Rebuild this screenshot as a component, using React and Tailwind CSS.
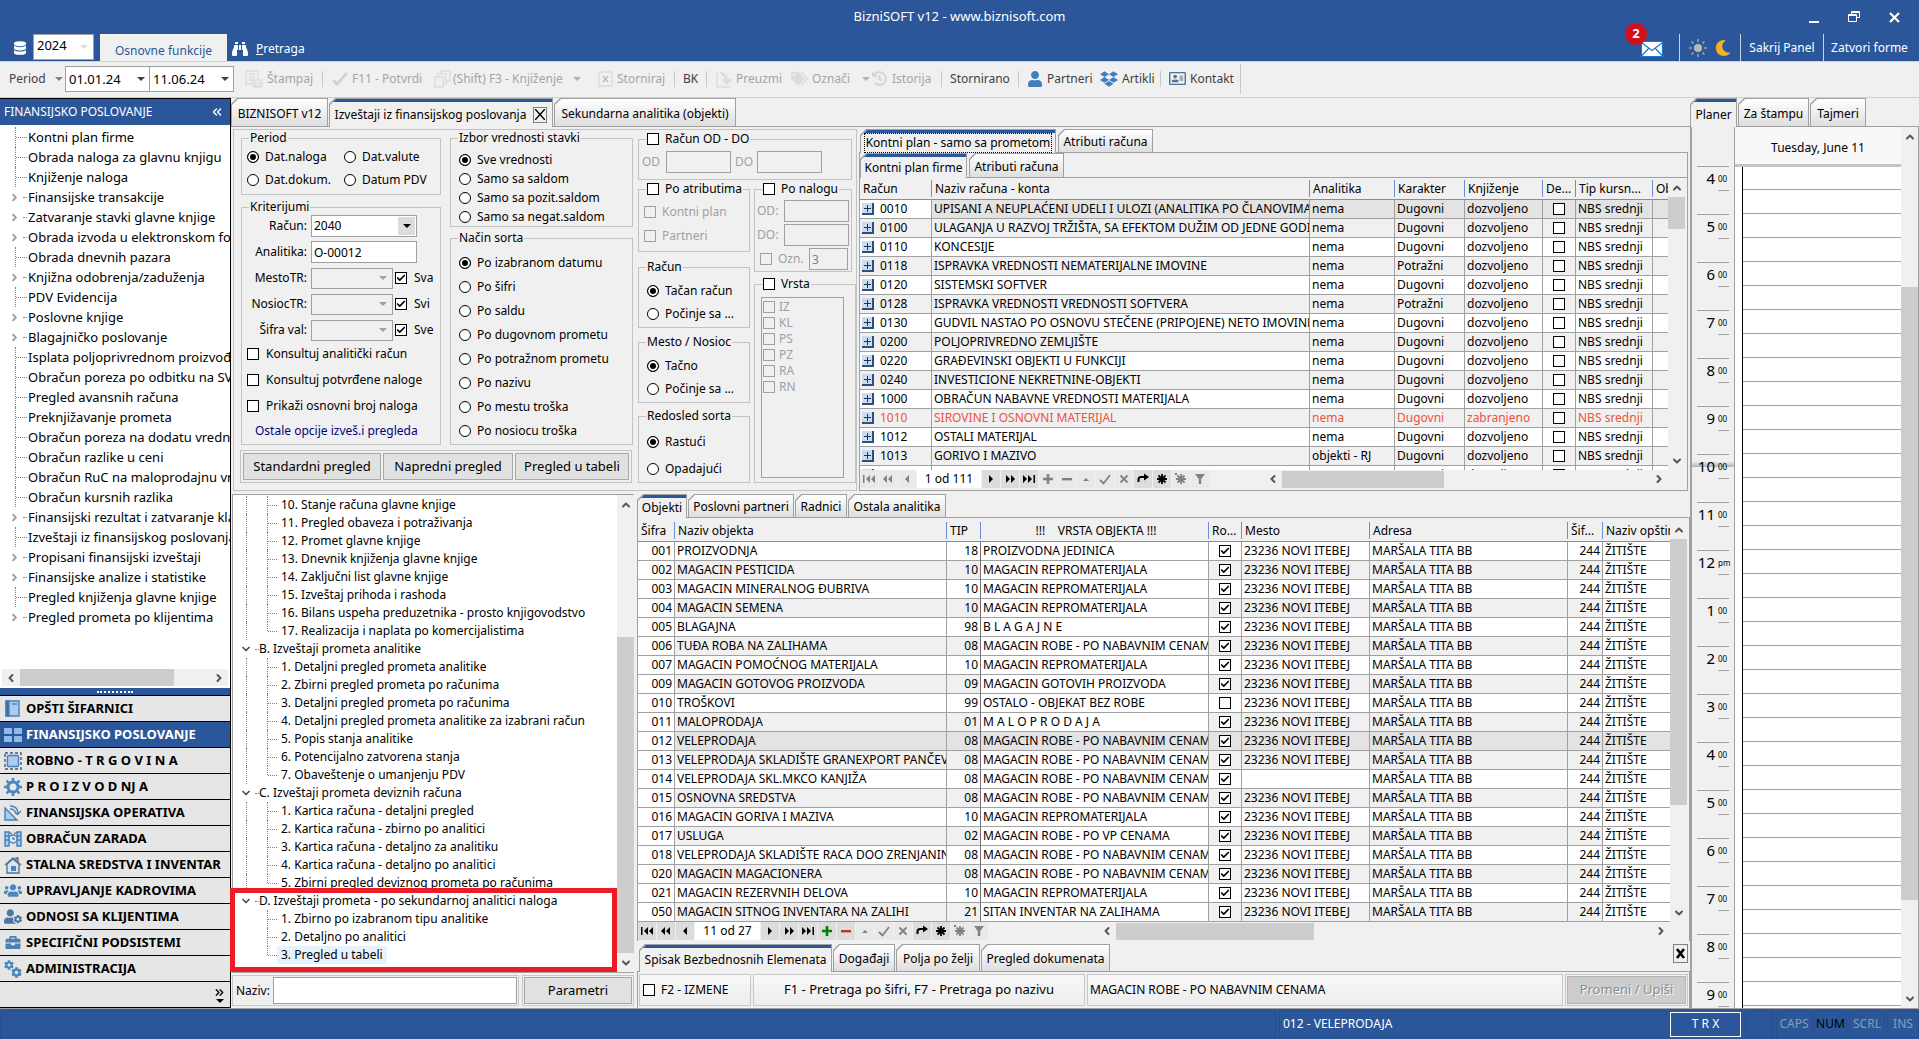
import React, { useState } from 'react';
import { ChevronDown, ChevronLeft, ChevronRight, ChevronUp, ChevronsLeft, ChevronsRight, Check } from 'lucide-react';
import {
  FaBinoculars,
  FaBriefcase,
  FaCog,
  FaCogs,
  FaDatabase,
  FaDropbox,
  FaHistory,
  FaMoon,
  FaRegAddressCard,
  FaTags,
  FaUser,
  FaUserCog,
  FaUsers,
} from 'react-icons/fa';

const MENU = [
  ['Kontni plan firme', false],
  ['Obrada naloga za glavnu knjigu', false],
  ['Knjiženje naloga', false],
  ['Finansijske transakcije', true],
  ['Zatvaranje stavki glavne knjige', true],
  ['Obrada izvoda u elektronskom formatu', true],
  ['Obrada dnevnih pazara', false],
  ['Knjižna odobrenja/zaduženja', true],
  ['PDV Evidencija', false],
  ['Poslovne knjige', true],
  ['Blagajničko poslovanje', true],
  ['Isplata poljoprivrednom proizvođaču', false],
  ['Obračun poreza po odbitku na SVR', false],
  ['Pregled avansnih računa', false],
  ['Preknjižavanje prometa', false],
  ['Obračun poreza na dodatu vrednost', false],
  ['Obračun razlike u ceni', false],
  ['Obračun RuC na maloprodajnu vrednost', false],
  ['Obračun kursnih razlika', false],
  ['Finansijski rezultat i zatvaranje klasa', true],
  ['Izveštaji iz finansijskog poslovanja', false],
  ['Propisani finansijski izveštaji', true],
  ['Finansijske analize i statistike', true],
  ['Pregled knjiženja glavne knjige', false],
  ['Pregled prometa po klijentima', true],
];

const REPORTS = [
  {
    title: null,
    items: [
      '10. Stanje računa glavne knjige',
      '11. Pregled obaveza i potraživanja',
      '12. Promet glavne knjige',
      '13. Dnevnik knjiženja glavne knjige',
      '14. Zaključni list glavne knjige',
      '15. Izveštaj prihoda i rashoda',
      '16. Bilans uspeha preduzetnika - prosto knjigovodstvo',
      '17. Realizacija i naplata po komercijalistima',
    ],
  },
  {
    title: 'B. Izveštaji prometa analitike',
    items: [
      '1. Detaljni pregled prometa analitike',
      '2. Zbirni pregled prometa po računima',
      '3. Detaljni pregled prometa po računima',
      '4. Detaljni pregled prometa analitike za izabrani račun',
      '5. Popis stanja analitike',
      '6. Potencijalno zatvorena stanja',
      '7. Obaveštenje o umanjenju PDV',
    ],
  },
  {
    title: 'C. Izveštaji prometa deviznih računa',
    items: [
      '1. Kartica računa - detaljni pregled',
      '2. Kartica računa - zbirno po analitici',
      '3. Kartica računa - detaljno za analitiku',
      '4. Kartica računa - detaljno po analitici',
      '5. Zbirni pregled deviznog prometa po računima',
    ],
  },
  {
    title: 'D. Izveštaji prometa - po sekundarnoj analitici naloga',
    marked: true,
    items: ['1. Zbirno po izabranom tipu analitike', '2. Detaljno po analitici', '3. Pregled u tabeli'],
  },
];

const ACCOUNTS = [
  ['0010', 'UPISANI A NEUPLAĆENI UDELI I ULOZI (ANALITIKA PO ČLANOVIMA)', 'nema', 'Dugovni'],
  ['0100', 'ULAGANJA U RAZVOJ TRŽIŠTA, SA EFEKTOM DUŽIM OD JEDNE GODINE', 'nema', 'Dugovni'],
  ['0110', 'KONCESIJE', 'nema', 'Dugovni'],
  ['0118', 'ISPRAVKA VREDNOSTI NEMATERIJALNE IMOVINE', 'nema', 'Potražni'],
  ['0120', 'SISTEMSKI SOFTVER', 'nema', 'Dugovni'],
  ['0128', 'ISPRAVKA VREDNOSTI VREDNOSTI SOFTVERA', 'nema', 'Potražni'],
  ['0130', 'GUDVIL NASTAO PO OSNOVU STEČENE (PRIPOJENE) NETO IMOVINE', 'nema', 'Dugovni'],
  ['0200', 'POLJOPRIVREDNO ZEMLJIŠTE', 'nema', 'Dugovni'],
  ['0220', 'GRAĐEVINSKI OBJEKTI U FUNKCIJI', 'nema', 'Dugovni'],
  ['0240', 'INVESTICIONE NEKRETNINE-OBJEKTI', 'nema', 'Dugovni'],
  ['1000', 'OBRAČUN NABAVNE VREDNOSTI MATERIJALA', 'nema', 'Dugovni'],
  ['1010', 'SIROVINE I OSNOVNI MATERIJAL', 'nema', 'Dugovni'],
  ['1012', 'OSTALI MATERIJAL', 'nema', 'Dugovni'],
  ['1013', 'GORIVO I MAZIVO', 'objekti - RJ', 'Dugovni'],
  ['1014', 'REZERVNI DELOVI', 'nema', 'Dugovni'],
];

const NABAVNE = 'MAGACIN ROBE - PO NABAVNIM CENAMA';
const REPRO = 'MAGACIN REPROMATERIJALA';

const OBJECTS = [
  ['001', 'PROIZVODNJA', '18', 'PROIZVODNA JEDINICA'],
  ['002', 'MAGACIN PESTICIDA', '10', REPRO],
  ['003', 'MAGACIN MINERALNOG ĐUBRIVA', '10', REPRO],
  ['004', 'MAGACIN SEMENA', '10', REPRO],
  ['005', 'BLAGAJNA', '98', 'B L A G A J N E'],
  ['006', 'TUĐA ROBA NA ZALIHAMA', '08', NABAVNE],
  ['007', 'MAGACIN POMOĆNOG MATERIJALA', '10', REPRO],
  ['009', 'MAGACIN GOTOVOG PROIZVODA', '09', 'MAGACIN GOTOVIH PROIZVODA'],
  ['010', 'TROŠKOVI', '99', 'OSTALO - OBJEKAT BEZ ROBE'],
  ['011', 'MALOPRODAJA', '01', 'M A L O P R O D A J A'],
  ['012', 'VELEPRODAJA', '08', NABAVNE],
  ['013', 'VELEPRODAJA SKLADIŠTE GRANEXPORT PANČEVO', '08', NABAVNE],
  ['014', 'VELEPRODAJA SKL.MKCO KANJIŽA', '08', NABAVNE],
  ['015', 'OSNOVNA SREDSTVA', '08', NABAVNE],
  ['016', 'MAGACIN GORIVA I MAZIVA', '10', REPRO],
  ['017', 'USLUGA', '02', 'MAGACIN ROBE - PO VP CENAMA'],
  ['018', 'VELEPRODAJA SKLADIŠTE RACA DOO ZRENJANIN', '08', NABAVNE],
  ['020', 'MAGACIN MAGACIONERA', '08', NABAVNE],
  ['021', 'MAGACIN REZERVNIH DELOVA', '10', REPRO],
  ['050', 'MAGACIN SITNOG INVENTARA NA ZALIHI', '21', 'SITAN INVENTAR NA ZALIHAMA'],
];

const HOURS = ['4', '5', '6', '7', '8', '9', '10', '11', '12', '1', '2', '3', '4', '5', '6', '7', '8', '9'];

/* ---------- small controls ---------- */

const CheckBox = ({ disabled, defaultChecked, label }) => (
  <span className="grid h-[12px] w-[12px] shrink-0">
    <input
      type="checkbox"
      aria-label={label}
      disabled={disabled}
      defaultChecked={defaultChecked}
      className="peer col-start-1 row-start-1 h-[12px] w-[12px] appearance-none border border-black bg-white disabled:border-[#a0a0a0] disabled:bg-[#f0f0f0]"
    />
    <Check className="pointer-events-none invisible col-start-1 row-start-1 m-px h-[10px] w-[10px] peer-checked:visible" strokeWidth={4} />
  </span>
);

const CheckLabel = ({ children, disabled, gap = 'gap-[6px]', defaultChecked }) => (
  <label className={`flex items-center leading-[16px] ${gap} ${disabled ? 'text-[#a0a0a0]' : ''}`}>
    <CheckBox disabled={disabled} defaultChecked={defaultChecked} />
    <span>{children}</span>
  </label>
);

const Radio = ({ name, children, defaultChecked, height }) => (
  <label className={`flex items-center gap-[6px] whitespace-nowrap ${height}`}>
    <input
      type="radio"
      name={name}
      defaultChecked={defaultChecked}
      className="h-[12px] w-[12px] shrink-0 appearance-none rounded-full border border-black bg-white checked:bg-black checked:shadow-[inset_0_0_0_2px_white]"
    />
    <span>{children}</span>
  </label>
);

const Group = ({ title, legendClass = 'leading-[14px]', className = '', children }) => (
  <fieldset className={`min-w-0 border border-[#c3c3c3] ${className}`}>
    <legend className={`ml-[7px] px-px ${legendClass}`}>{title}</legend>
    {children}
  </fieldset>
);

const Tab = ({ active, focused, children, className = '' }) => (
  <button
    type="button"
    role="tab"
    aria-selected={!!active}
    className={`flex bg-[#a0a0a0] p-px pb-0 leading-[16px] whitespace-nowrap [clip-path:polygon(6px_0,100%_0,100%_100%,0_100%,0_6px)] ${active ? '-mb-px' : ''} ${className}`}
  >
    <span
      className={`flex flex-1 items-center justify-center [clip-path:polygon(6px_0,100%_0,100%_100%,0_100%,0_6px)] ${
        active ? 'border-t-3 border-[#2b579a] bg-[#f0f0f0]' : 'bg-linear-to-b from-white to-[#dedede] pt-[2px]'
      }`}
    >
      <span className={focused ? 'flex items-center border border-dotted border-black px-px leading-[18px]' : 'flex items-center gap-1'}>{children}</span>
    </span>
  </button>
);

const Arrow = ({ className = 'border-t-[#808080]' }) => (
  <span className={`h-0 w-0 border-x-4 border-t-4 border-x-transparent ${className}`} />
);

const VScroll = ({ before, thumb, after }) => (
  <div className="flex w-[17px] shrink-0 flex-col items-center bg-[#f0f0f0] text-[#555]">
    <button type="button" aria-label="Gore" className="flex h-[19px] items-center"><ChevronUp size={12} strokeWidth={4} /></button>
    <div className="flex w-full flex-1 flex-col">
      <div className={before} />
      <div className={`bg-[#cdcdcd] ${thumb}`} />
      <div className={after} />
    </div>
    <button type="button" aria-label="Dole" className="flex h-[19px] items-center"><ChevronDown size={12} strokeWidth={4} /></button>
  </div>
);

const HScroll = ({ thumb, className = '' }) => (
  <div className={`flex h-[17px] items-center bg-[#f0f0f0] text-[#555] ${className}`}>
    <button type="button" aria-label="Levo" className="flex w-[18px] justify-center"><ChevronLeft size={12} strokeWidth={4} /></button>
    <div className="h-full flex-1"><div className={`h-full bg-[#cdcdcd] ${thumb}`} /></div>
    <button type="button" aria-label="Desno" className="flex w-[18px] justify-center"><ChevronRight size={12} strokeWidth={4} /></button>
  </div>
);

/* ---------- record navigator ---------- */

const left = (x) => <path d={`M${x + 4} 2v8L${x} 6z`} />;
const right = (x) => <path d={`M${x} 2v8l4-4z`} />;
const burst = <path d="M6 1v10M1 6h10M2.5 2.5l7 7M9.5 2.5l-7 7" fill="none" stroke="currentColor" strokeWidth="1.8" />;

const NAV_GLYPHS = {
  first: <>{left(3)}{left(8)}<path d="M0 2h1.5v8H0z" /></>,
  prevPage: <>{left(1)}{left(6)}</>,
  prev: left(4),
  next: right(4),
  nextPage: <>{right(2)}{right(7)}</>,
  last: <>{right(0)}{right(5)}<path d="M10.5 2H12v8h-1.5z" /></>,
  insert: <path d="M4.7 1h2.6v3.7H11v2.6H7.3V11H4.7V7.3H1V4.7h3.7z" />,
  remove: <path d="M1 5h10v2.4H1z" />,
  edit: <path d="M3 8h6L6 5z" />,
  post: <path d="M1 7l3.5 3.5L11 2" fill="none" stroke="currentColor" strokeWidth="1.8" />,
  cancel: <path d="M2.5 2.5l7 7M9.5 2.5l-7 7" fill="none" stroke="currentColor" strokeWidth="1.8" />,
  refresh: <><path d="M1.5 9V6.5Q1.5 4 4 4h4" fill="none" stroke="currentColor" strokeWidth="2" /><path d="M7 .5v7L12 4z" /></>,
  bookmark: burst,
  goto: <>{burst}<path d="M0 0h2v2H0z" /></>,
  filter: <path d="M1 1h10L7.2 6v5H4.8V6z" />,
};

const NavButton = ({ kind, disabled, color = 'text-black' }) => (
  <button
    type="button"
    aria-label={kind}
    disabled={disabled}
    className={`flex h-[18px] w-[18px] items-center justify-center ${disabled ? 'bg-[#e9e9e9] text-[#808080]' : `bg-[#dcdcdc] ${color}`}`}
  >
    <svg width="12" height="12" viewBox="0 0 12 12" fill="currentColor">{NAV_GLYPHS[kind]}</svg>
  </button>
);

const Navigator = ({ position, atStart, readOnly, labelClass }) => (
  <div className="flex items-center gap-px">
    {['first', 'prevPage', 'prev'].map((k) => <NavButton key={k} kind={k} disabled={atStart} />)}
    <span className={`bg-white text-center text-[12px] leading-[18px] ${labelClass}`}>{position}</span>
    {['next', 'nextPage', 'last'].map((k) => <NavButton key={k} kind={k} />)}
    <NavButton kind="insert" disabled={readOnly} color="text-[#008000]" />
    <NavButton kind="remove" disabled={readOnly} color="text-[#c8302c]" />
    {['edit', 'post', 'cancel'].map((k) => <NavButton key={k} kind={k} disabled />)}
    <NavButton kind="refresh" />
    <NavButton kind="bookmark" />
    <NavButton kind="goto" disabled />
    <NavButton kind="filter" disabled />
  </div>
);

/* ---------- title bar and toolbar ---------- */

const SunIcon = () => (
  <svg width="18" height="18" viewBox="0 0 18 18" stroke="#9aa3ae" strokeWidth="1.6" fill="#b9b9b9">
    <circle cx="9" cy="9" r="4" stroke="none" />
    <path d="M9 0v3M9 15v3M0 9h3M15 9h3M2.5 2.5l2 2M13.5 13.5l2 2M2.5 15.5l2-2M13.5 4.5l2-2" />
  </svg>
);

const MailIcon = () => (
  <svg width="22" height="16" viewBox="0 0 22 16" fill="white" stroke="#1e78d0" strokeWidth="1.2">
    <path d="M.5.5h21v15H.5z" />
    <path d="M.5 1.5L11 9.500l10.500-8M.5 15l7.500-8M21.500 15L14 7" fill="none" />
  </svg>
);

const Header = () => (
  <header className="bg-[#2b579a] text-white">
    <div className="flex h-[34px] items-center">
      <div className="flex-1 pl-[19px]" />
      <h1 className="text-[13px]">BizniSOFT v12 - www.biznisoft.com</h1>
      <div className="flex flex-1 items-center justify-end gap-[29px] pr-[19px]">
        <button type="button" aria-label="Umanji" className="flex h-[11px] w-[10px] items-end"><span className="h-[2px] w-full bg-white" /></button>
        <button type="button" aria-label="Vrati" className="flex">
          <svg width="12" height="12" viewBox="0 0 12 12" fill="none" stroke="white"><path d="M3.5 3V.5h8v6H9M.5 3.5h8v7h-8zM.5 4.5h8M3.5 1.5h8" /></svg>
        </button>
        <button type="button" aria-label="Zatvori" className="flex">
          <svg width="11" height="11" viewBox="0 0 11 11" stroke="white" strokeWidth="2.2"><path d="M1 1l9 9M10 1l-9 9" /></svg>
        </button>
      </div>
    </div>
    <div className="flex h-[27px] items-stretch pl-[14px] text-[12px]">
      <FaDatabase className="mt-[7px] h-[14px] w-[12px]" />
      <div className="relative ml-[7px] flex h-[26px]">
        <select aria-label="Godina" className="w-[61px] appearance-none border border-[#a0a0a0] bg-white pb-[3px] pl-[3px] text-[13px] text-black">
          <option>2024</option>
        </select>
        <Arrow className="absolute top-[11px] right-[6px] border-t-[#dcdcdc]" />
      </div>
      <button type="button" className="ml-[6px] w-[127px] bg-[#f0f0f0] pt-[6px] text-[#2b579a]">Osnovne funkcije</button>
      <a href="#pretraga" className="ml-[5px] flex items-center gap-[8px] pt-[2px]">
        <FaBinoculars className="h-[16px] w-[16px]" />
        <span><span className="underline">P</span>retraga</span>
      </a>
      <div className="ml-auto flex items-stretch">
        <button type="button" aria-label="Poruke" className="relative mr-[16px] flex items-center pt-[2px]">
          <MailIcon />
          <span className="absolute top-[-11px] left-[-16px] flex h-[22px] w-[22px] items-center justify-center rounded-full bg-[#d0111b] text-[13px] font-bold">2</span>
        </button>
        <div className="flex w-[61px] items-center justify-center gap-[8px] border-l border-[#c8d2e4]">
          <button type="button" aria-label="Svetla tema" className="flex"><SunIcon /></button>
          <button type="button" aria-label="Tamna tema" className="flex"><FaMoon className="h-[16px] w-[16px] text-[#fbb024]" /></button>
        </div>
        <button type="button" className="w-[83px] border-l border-[#c8d2e4]">Sakrij Panel</button>
        <button type="button" className="w-[96px] border-l border-[#c8d2e4] pr-[4px]">Zatvori forme</button>
      </div>
    </div>
  </header>
);

const Sep = ({ tall }) => <span className={`w-px bg-[#c9c9c9] ${tall ? 'h-[30px]' : 'h-[16px]'}`} />;

const ToolButton = ({ icon, children, disabled, className = '', dropdown }) => (
  <button type="button" disabled={disabled} className={`flex items-center whitespace-nowrap disabled:text-[#a5a5a5] ${className}`}>
    {icon}
    <span>{children}</span>
    {dropdown && <Arrow className="ml-[8px] border-t-[#b0b0b0]" />}
  </button>
);

const outline = { fill: 'none', stroke: '#dcdcdc', strokeWidth: 1.4 };

const DateBox = ({ label, value }) => (
  <div className="relative -ml-px flex items-center">
    <input aria-label={label} defaultValue={value} className="h-[26px] w-[85px] border border-[#a0a0a0] bg-white pl-[3px] text-[13px] text-black" />
    <Arrow className="absolute right-[5px]" />
  </div>
);

const Toolbar = () => (
  <div className="flex h-[37px] items-center border-t border-b border-[#d0d0d0] pb-[2px] pl-[9px] text-[12px] text-[#404040]">
    <button type="button" className="flex w-[57px] items-center gap-[9px]">Period <Arrow /></button>
    <DateBox label="Datum od" value="01.01.24" />
    <DateBox label="Datum do" value="11.06.24" />
    <span className="ml-[4px]"><Sep /></span>
    <ToolButton disabled className="w-[84px] gap-[4px] pl-[7px]" icon={<svg width="18" height="18" viewBox="0 0 18 18" {...outline}><path d="M1 1h12v8M1 1v13h6M4 4h6M4 7h6M4 10h3M8 10h9v6H8zM10 13h5v4h-5z" /></svg>}>Štampaj</ToolButton>
    <Sep />
    <ToolButton disabled className="w-[111px] gap-[4px] pl-[9px]" icon={<svg width="16" height="14" viewBox="0 0 16 14" fill="none" stroke="#d4d4d4" strokeWidth="3"><path d="M1 8l4 4L15 1" /></svg>}>F11 - Potvrdi</ToolButton>
    <ToolButton disabled dropdown className="w-[164px] gap-[2px]" icon={<svg width="17" height="18" viewBox="0 0 17 18" {...outline}><path d="M1 7h8v10H1zM4 7V4h8v10H9M7 4V1h9v10h-4" /></svg>}>(Shift) F3 - Knjiženje</ToolButton>
    <ToolButton disabled className="w-[76px] gap-[4px]" icon={<svg width="15" height="16" viewBox="0 0 15 16" {...outline}><path d="M1 1h13v14H1z" /><path d="M5 5l5 6M10 5l-5 6" stroke="#bdbdbd" /></svg>}>Storniraj</ToolButton>
    <Sep />
    <ToolButton className="w-[31px] justify-center">BK</ToolButton>
    <Sep />
    <ToolButton disabled className="w-[84px] gap-[4px] pl-[9px]" icon={<svg width="16" height="18" viewBox="0 0 16 18" {...outline}><path d="M1 1v16h14" /><path d="M4 3q7 0 7 8M7 10l4 4 4-4z" fill="#dcdcdc" /></svg>}>Preuzmi</ToolButton>
    <ToolButton disabled dropdown className="w-[81px] gap-[4px]" icon={<FaTags className="h-[15px] w-[17px] text-[#dcdcdc]" />}>Označi</ToolButton>
    <ToolButton disabled className="w-[69px] gap-[5px]" icon={<FaHistory className="h-[15px] w-[15px] text-[#d4d4d4]" />}>Istorija</ToolButton>
    <Sep />
    <ToolButton className="w-[76px] justify-center">Stornirano</ToolButton>
    <Sep />
    <ToolButton className="w-[81px] gap-[5px] pl-[9px]" icon={<FaUser className="h-[18px] w-[14px] text-[#3f7fbf]" />}>Partneri</ToolButton>
    <ToolButton className="w-[60px] gap-[4px]" icon={<FaDropbox className="h-[20px] w-[18px] text-[#3f7fbf]" />}>Artikli</ToolButton>
    <Sep />
    <ToolButton className="w-[79px] gap-[4px] pl-[8px]" icon={<FaRegAddressCard className="h-[17px] w-[17px] text-[#4f759b]" />}>Kontakt</ToolButton>
    <Sep tall />
  </div>
);

/* ---------- left navigation ---------- */

const blueShape = { fill: '#a9cdf0', stroke: '#4a80b4', strokeWidth: 1.4 };

const MODULES = [
  ['OPŠTI ŠIFARNICI', <svg width="16" height="18" viewBox="0 0 16 18" {...blueShape}><path d="M1 1h13v15H1z" /><path d="M1 1h3v15H1z" fill="#3a6c9e" /><path d="M7 4h5" /></svg>],
  ['FINANSIJSKO POSLOVANJE', <svg width="18" height="14" viewBox="0 0 18 14" fill="#8ebbe8"><path d="M0 0h8v6H0zM10 0h8v6h-8zM0 8h8v6H0zM10 8h8v6h-8z" /></svg>],
  ['ROBNO - T R G O V I N A', <svg width="18" height="18" viewBox="0 0 18 18" {...blueShape}><rect x="3.5" y="3.5" width="11" height="11" rx="1" /><path d="M1 1h16v16H1z" fill="none" stroke="#3c5a78" strokeDasharray="3 2" /></svg>],
  ['P R O I Z V O D NJ A', <svg width="20" height="20" viewBox="0 0 20 20" fill="none" stroke="#4a86c0"><circle cx="10" cy="10" r="5" strokeWidth="3" /><path d="M10 1v3M10 16v3M1 10h3M16 10h3M3.6 3.6l2.2 2.2M14.2 14.2l2.2 2.2M3.6 16.4l2.2-2.2M14.2 5.8l2.2-2.2" strokeWidth="2.6" /></svg>],
  ['FINANSIJSKA OPERATIVA', <svg width="18" height="18" viewBox="0 0 18 18" {...blueShape}><path d="M1 4v12h12L6 9 1 4z" /><path d="M6 2q8 0 8 8l3-3M14 11l-3-3M6 5q5 0 6 5" fill="none" /></svg>],
  ['OBRAČUN ZARADA', <svg width="18" height="16" viewBox="0 0 18 16" {...blueShape}><path d="M1 1h4v14H1zM13 1h4v14h-4zM1 5h4M1 9h4M13 5h4M13 9h4" /><circle cx="9" cy="8" r="4" fill="#dcebf9" /><path d="M9 6v2h2M5 1l3 2M13 1l-3 2" fill="none" /></svg>],
  ['STALNA SREDSTVA I INVENTAR', <svg width="18" height="18" viewBox="0 0 18 18" fill="#d5e6f6" stroke="#5f7388" strokeWidth="1.4"><path d="M3 8v9h12V8L9 3z" /><path d="M1 9l8-7 8 7M14 6V2h-2v2" fill="none" /><path d="M7 10h5v5H7z" fill="#4a86c0" stroke="none" /></svg>],
  ['UPRAVLJANJE KADROVIMA', <FaUsers className="h-[17px] w-[18px] text-[#4a86c0]" />],
  ['ODNOSI SA KLIJENTIMA', <FaUserCog className="h-[17px] w-[18px] text-[#4a78a4]" />],
  ['SPECIFIČNI PODSISTEMI', <FaBriefcase className="h-[15px] w-[16px] text-[#4a80b4]" />],
  ['ADMINISTRACIJA', <span className="relative h-[18px] w-[18px] text-[#4a86c0]"><FaCog className="absolute top-0 left-0 h-[10px] w-[10px]" /><FaCog className="absolute right-0 bottom-0 h-[11px] w-[11px]" /></span>],
];

const Sidebar = () => {
  const [module, setModule] = useState('FINANSIJSKO POSLOVANJE');
  return (
    <aside className="flex w-[231px] shrink-0 flex-col border-t border-r border-black bg-white">
      <h2 className="flex h-[26px] shrink-0 items-center justify-between bg-[#2b579a] pr-[6px] pl-[4px] text-[12px] text-white">
        FINANSIJSKO POSLOVANJE
        <button type="button" aria-label="Sakrij" className="flex"><ChevronsLeft size={14} strokeWidth={2.5} /></button>
      </h2>
      <ul className="min-h-0 flex-1 overflow-hidden pt-[2px] text-[13px]">
        {MENU.map(([text, expandable]) => (
          <li key={text} className="flex h-[20px] items-center overflow-hidden whitespace-nowrap">
            {expandable ? (
              <>
                <ChevronRight size={11} strokeWidth={4} className="ml-[9px] shrink-0 text-[#a0a0a0]" />
                <span className="ml-[3px] w-[4px] shrink-0 border-t border-dotted border-[#808080]" />
              </>
            ) : (
              <>
                <span className="ml-[15px] h-full shrink-0 border-l border-dotted border-[#808080]" />
                <span className="w-[11px] shrink-0 border-t border-dotted border-[#808080]" />
              </>
            )}
            <a href="#stavka" className="ml-px leading-[20px]">{text}</a>
          </li>
        ))}
      </ul>
      <HScroll className="mx-[2px] shrink-0" thumb="w-[81%]" />
      <div className="mt-[2px] flex h-[7px] shrink-0 items-center justify-center bg-[#2b579a]">
        <span className="w-[36px] border-t-2 border-dotted border-white" />
      </div>
      <nav>
        {MODULES.map(([name, icon]) => (
          <button
            key={name}
            type="button"
            onClick={() => setModule(name)}
            className={`flex h-[26px] w-full items-center border-t border-black text-left text-[13px] font-bold ${module === name ? 'bg-[#2b579a] text-white' : 'bg-[#e6e6e6] text-black'}`}
          >
            <span className="flex w-[26px] items-center justify-center">{icon}</span>
            {name}
          </button>
        ))}
      </nav>
      <div className="flex h-[27px] shrink-0 items-center justify-end border-y border-black bg-[#e6e6e6] pr-[4px]">
        <button type="button" aria-label="Više" className="flex flex-col items-center"><ChevronsRight size={13} strokeWidth={2.5} /><Arrow className="border-t-black" /></button>
      </div>
    </aside>
  );
};

/* ---------- report criteria ---------- */

const DisabledSelect = ({ id }) => (
  <div className="relative flex w-[82px] items-center">
    <select id={id} disabled className="h-[21px] w-full appearance-none border border-[#a0a0a0] bg-[#f0f0f0]" />
    <Arrow className="absolute right-[6px] border-t-[#a0a0a0]" />
  </div>
);

const Field = ({ id, label, children }) => (
  <div className="flex h-[22px] items-center">
    <label htmlFor={id} className="w-[66px] pr-px text-right">{label}</label>
    <div className="ml-[3px] flex items-center gap-[2px]">{children}</div>
  </div>
);

const grayBox = 'h-[22px] border border-[#a0a0a0] bg-[#f0f0f0] pl-[2px] text-[#808080]';

const Criteria = () => (
  <section className="flex w-[624px] shrink-0 border border-[#c3c3c3] pl-[7px] text-[12px]">
    <div className="w-[392px] pt-px">
      <div className="flex gap-[9px]">
        <div className="flex w-[200px] flex-col gap-[5px]">
          <Group title="Period" className="pb-[3px]">
            <div className="grid grid-cols-[97px_1fr] pl-[5px]">
              <Radio name="period" height="h-[23px]" defaultChecked>Dat.naloga</Radio>
              <Radio name="period" height="h-[23px]">Dat.valute</Radio>
              <Radio name="period" height="h-[23px]">Dat.dokum.</Radio>
              <Radio name="period" height="h-[23px]">Datum PDV</Radio>
            </div>
          </Group>
          <Group title="Kriterijumi" className="pt-px pb-px">
            <div className="flex flex-col gap-[4px]">
              <Field id="racun" label="Račun:">
                <div className="relative flex items-center">
                  <select id="racun" className="h-[22px] w-[106px] appearance-none border border-[#a0a0a0] bg-white pl-[2px]"><option>2040</option></select>
                  <span className="pointer-events-none absolute right-[2px] flex h-[18px] w-[17px] items-center justify-center bg-[#dcdcdc]"><Arrow className="border-t-black" /></span>
                </div>
              </Field>
              <Field id="analitika" label="Analitika:">
                <input id="analitika" defaultValue="O-00012" className="h-[22px] w-[106px] border border-[#a0a0a0] bg-white pl-[2px]" />
              </Field>
              <Field id="mesto" label="MestoTR:"><DisabledSelect id="mesto" /><CheckLabel defaultChecked gap="gap-[7px]">Sva</CheckLabel></Field>
              <Field id="nosioc" label="NosiocTR:"><DisabledSelect id="nosioc" /><CheckLabel defaultChecked gap="gap-[7px]">Svi</CheckLabel></Field>
              <Field id="valuta" label="Šifra val:"><DisabledSelect id="valuta" /><CheckLabel defaultChecked gap="gap-[7px]">Sve</CheckLabel></Field>
            </div>
            <div className="grid auto-rows-[26px] pl-[5px]">
              <CheckLabel gap="gap-[7px]">Konsultuj analitički račun</CheckLabel>
              <CheckLabel gap="gap-[7px]">Konsultuj potvrđene naloge</CheckLabel>
              <CheckLabel gap="gap-[7px]">Prikaži osnovni broj naloga</CheckLabel>
            </div>
            <a href="#opcije" className="block pl-[13px] leading-[24px] text-[#000080]">Ostale opcije izveš.i pregleda</a>
          </Group>
        </div>
        <div className="flex flex-1 flex-col gap-[4px]">
          <Group title="Izbor vrednosti stavki" className="pt-[5px]">
            <div className="pl-[8px]">
              <Radio name="vrednost" height="h-[19px]" defaultChecked>Sve vrednosti</Radio>
              <Radio name="vrednost" height="h-[19px]">Samo sa saldom</Radio>
              <Radio name="vrednost" height="h-[19px]">Samo sa pozit.saldom</Radio>
              <Radio name="vrednost" height="h-[19px]">Samo sa negat.saldom</Radio>
            </div>
          </Group>
          <Group title="Način sorta" className="flex-1 pt-[6px]">
            <div className="pl-[8px]">
              <Radio name="sort" height="h-[24px]" defaultChecked>Po izabranom datumu</Radio>
              {['Po šifri', 'Po saldu', 'Po dugovnom prometu', 'Po potražnom prometu', 'Po nazivu', 'Po mestu troška', 'Po nosiocu troška'].map((t) => (
                <Radio key={t} name="sort" height="h-[24px]">{t}</Radio>
              ))}
            </div>
          </Group>
        </div>
      </div>
      <div className="mt-[5px] mr-px -ml-px flex gap-[2px] border border-[#c3c3c3] p-[2px] text-[13px]">
        <button type="button" className="h-[27px] w-[138px] border border-[#a8a8a8] bg-[#e1e1e1]">Standardni pregled</button>
        <button type="button" className="h-[27px] w-[130px] border border-[#a8a8a8] bg-[#e1e1e1]">Napredni pregled</button>
        <button type="button" className="h-[27px] flex-1 border border-[#a8a8a8] bg-[#e1e1e1] whitespace-nowrap">Pregled u tabeli</button>
      </div>
    </div>

    <div className="ml-[5px] flex flex-1 flex-col pt-px pb-[8px]">
      <Group title={<CheckLabel>Račun OD - DO</CheckLabel>} legendClass="leading-[16px]" className="mr-[4px] pt-[4px] pb-[6px]">
        <div className="flex items-center pl-[3px] text-[#a0a0a0]">
          <label htmlFor="od" className="w-[24px]">OD</label>
          <input id="od" disabled className={`w-[65px] ${grayBox}`} />
          <label htmlFor="do" className="ml-[4px] w-[22px]">DO</label>
          <input id="do" disabled className={`w-[65px] ${grayBox}`} />
        </div>
      </Group>
      <div className="mt-px flex flex-1 gap-[4px]">
        <div className="flex w-[112px] flex-col">
          <Group title={<CheckLabel>Po atributima</CheckLabel>} legendClass="leading-[16px]" className="pt-[3px] pb-[3px]">
            <div className="grid auto-rows-[24px] pl-[5px]">
              <CheckLabel disabled>Kontni plan</CheckLabel>
              <CheckLabel disabled>Partneri</CheckLabel>
            </div>
          </Group>
          <Group title="Račun" legendClass="leading-[16px]" className="mt-[7px] pt-[4px] pb-[2px]">
            <div className="pl-[8px]">
              <Radio name="racunTip" height="h-[23px]" defaultChecked>Tačan račun</Radio>
              <Radio name="racunTip" height="h-[23px]">Počinje sa ...</Radio>
            </div>
          </Group>
          <Group title="Mesto / Nosioc" legendClass="leading-[16px]" className="mt-[6px] pt-[4px] pb-[2px]">
            <div className="pl-[8px]">
              <Radio name="mestoTip" height="h-[23px]" defaultChecked>Tačno</Radio>
              <Radio name="mestoTip" height="h-[23px]">Počinje sa ...</Radio>
            </div>
          </Group>
          <Group title="Redosled sorta" legendClass="leading-[16px]" className="mt-[5px] flex-1 pt-[4px]">
            <div className="pl-[8px]">
              <Radio name="redosled" height="h-[27px]" defaultChecked>Rastući</Radio>
              <Radio name="redosled" height="h-[27px]">Opadajući</Radio>
            </div>
          </Group>
        </div>
        <div className="flex flex-1 flex-col gap-[4px]">
          <Group title={<CheckLabel>Po nalogu</CheckLabel>} legendClass="leading-[16px]" className="mr-[4px] pt-[3px] pb-px">
            <div className="flex flex-col gap-[2px] pl-[2px] text-[#a0a0a0]">
              <div className="flex items-center"><label htmlFor="nalogOd" className="w-[27px]">OD:</label><input id="nalogOd" disabled className={`w-[65px] ${grayBox}`} /></div>
              <div className="flex items-center"><label htmlFor="nalogDo" className="w-[27px]">DO:</label><input id="nalogDo" disabled className={`w-[65px] ${grayBox}`} /></div>
              <div className="flex items-center justify-between pr-[3px] pl-[3px]"><CheckLabel disabled>Ozn.</CheckLabel><input aria-label="Oznaka" disabled defaultValue="3" className={`w-[39px] ${grayBox}`} /></div>
            </div>
          </Group>
          <Group title={<CheckLabel>Vrsta</CheckLabel>} legendClass="leading-[16px]" className="flex-1">
            <div className="mt-[5px] mr-[11px] ml-[6px] grid h-[181px] auto-rows-[16px] border border-[#a0a0a0] pt-px pl-px">
              {['IZ', 'KL', 'PS', 'PZ', 'RA', 'RN'].map((t) => <CheckLabel key={t} disabled gap="gap-[4px]">{t}</CheckLabel>)}
            </div>
          </Group>
        </div>
      </div>
    </div>
  </section>
);

/* ---------- grids ---------- */

const Th = ({ children, align = 'text-left', last }) => (
  <th className="h-[22px] overflow-hidden border-b border-[#6b8fd0] bg-[#f0f0f0] p-0 font-normal">
    <span className={`my-[2px] block h-[17px] overflow-hidden pl-[3px] leading-[17px] text-ellipsis whitespace-nowrap ${align} ${last ? '' : 'border-r border-[#6b8fd0]'}`}>{children}</span>
  </th>
);

const Td = ({ children, className = '' }) => (
  <td className={`h-[19px] overflow-hidden border-r border-b border-[#a0a0a0] px-[2px] py-0 leading-[18px] whitespace-nowrap ${className}`}>{children}</td>
);

const ExpandIcon = () => (
  <svg width="12" height="12" viewBox="0 0 12 12">
    <path d="M0 0h12v12H0z" fill="#2f4f78" />
    <path d="M0 0h10v10H0z" fill="#c9dcf2" />
    <path d="M2 5.5h7M5.500 2v7" stroke="#1d3557" />
  </svg>
);

const AccountsPanel = () => (
  <section className="flex min-w-0 flex-1 flex-col text-[12px]">
    <div role="tablist" className="flex gap-[2px] border-b border-[#a0a0a0] pl-px">
      <Tab active focused className="h-[24px] w-[196px]">Kontni plan - samo sa prometom</Tab>
      <Tab className="h-[23px] w-[95px]">Atributi računa</Tab>
    </div>
    <div className="flex min-h-0 flex-1 flex-col border-x border-b border-[#a0a0a0]">
      <div role="tablist" className="flex gap-[2px] border-b border-[#a0a0a0]">
        <Tab active className="h-[25px] w-[107px]">Kontni plan firme</Tab>
        <Tab className="h-[24px] w-[95px]">Atributi računa</Tab>
      </div>
      <div className="flex min-h-0 flex-1 pr-[2px]">
        <div className="min-w-0 flex-1 overflow-hidden">
          <table className="w-full table-fixed border-separate border-spacing-0">
            <colgroup>
              <col className="w-[72px]" /><col /><col className="w-[85px]" /><col className="w-[70px]" /><col className="w-[78px]" />
              <col className="w-[33px]" /><col className="w-[77px]" /><col className="w-[15px]" />
            </colgroup>
            <thead>
              <tr>
                <Th>Račun</Th><Th>Naziv računa - konta</Th><Th>Analitika</Th><Th>Karakter</Th><Th>Knjiženje</Th><Th>De...</Th><Th>Tip kursn...</Th>
                <th className="overflow-hidden border-b border-[#6b8fd0] p-0 pl-[3px] text-left font-normal">Ob</th>
              </tr>
            </thead>
            <tbody>
              {ACCOUNTS.map(([code, name, analytics, side], i) => {
                const blocked = code === '1010';
                const tone = i === 0 ? 'bg-[#e3e3e3]' : i % 2 ? 'bg-[#f0f0f0]' : 'bg-white';
                return (
                  <tr key={code} className={`${tone} ${blocked ? 'text-[#f0503c]' : ''}`}>
                    <Td className={i === 0 ? 'bg-white' : ''}>
                      <span className="flex items-center gap-[6px]"><button type="button" aria-label="Proširi" className="flex"><ExpandIcon /></button>{code}</span>
                    </Td>
                    <Td>{name}</Td>
                    <Td>{analytics}</Td>
                    <Td>{side}</Td>
                    <Td>{blocked ? 'zabranjeno' : 'dozvoljeno'}</Td>
                    <Td><span className="flex justify-center"><CheckBox label="Devizni" /></span></Td>
                    <Td>NBS srednji</Td>
                    <Td className="border-r-0" />
                  </tr>
                );
              })}
            </tbody>
          </table>
        </div>
        <VScroll before="h-0" thumb="h-[32px]" after="flex-1" />
      </div>
      <div className="flex shrink-0 items-center pr-[2px] pb-[2px]">
        <Navigator position="1 od 111" atStart readOnly labelClass="w-[64px]" />
        <HScroll className="ml-[55px] flex-1" thumb="w-[44%]" />
        <span className="w-[17px]" />
      </div>
    </div>
  </section>
);

const ObjectsPanel = () => (
  <section className="flex min-w-0 flex-1 flex-col text-[12px]">
    <div role="tablist" className="flex gap-px border-b border-[#a0a0a0]">
      <Tab active className="h-[24px] w-[50px]">Objekti</Tab>
      <Tab className="h-[23px] w-[106px]">Poslovni partneri</Tab>
      <Tab className="h-[23px] w-[52px]">Radnici</Tab>
      <Tab className="h-[23px] w-[98px]">Ostala analitika</Tab>
    </div>
    <div className="flex border-x border-[#a0a0a0] pt-[2px] pr-[2px]">
      <div className="min-w-0 flex-1 overflow-hidden">
        <table className="w-full table-fixed border-separate border-spacing-0">
          <colgroup>
            <col className="w-[37px]" /><col className="w-[272px]" /><col className="w-[34px]" /><col className="w-[228px]" /><col className="w-[33px]" />
            <col className="w-[128px]" /><col /><col className="w-[35px]" /><col className="w-[67px]" />
          </colgroup>
          <thead>
            <tr>
              <Th>Šifra</Th><Th>Naziv objekta</Th><Th>TIP</Th>
              <Th align="text-center">!!! &nbsp;&nbsp; VRSTA OBJEKTA !!!</Th>
              <Th>Ro...</Th><Th>Mesto</Th><Th>Adresa</Th><Th>Šif...</Th>
              <th className="overflow-hidden border-b border-[#6b8fd0] p-0 pl-[3px] text-left font-normal whitespace-nowrap">Naziv opštine</th>
            </tr>
          </thead>
          <tbody>
            {OBJECTS.map(([code, name, type, kind], i) => {
              const selected = code === '012';
              const tone = selected ? 'bg-[#e3e3e3]' : i % 2 ? 'bg-[#f0f0f0]' : 'bg-white';
              return (
                <tr key={code} className={tone}>
                  <Td className="bg-white text-right">{code}</Td>
                  <Td>{name}</Td>
                  <Td className="border-r-[#707070] text-right">{type}</Td>
                  <Td className={selected ? '' : 'bg-white'}>{kind}</Td>
                  <Td><span className="flex justify-center"><CheckBox label="Robno" defaultChecked={code !== '010'} /></span></Td>
                  <Td>{code === '014' ? '' : '23236 NOVI ITEBEJ'}</Td>
                  <Td>MARŠALA TITA BB</Td>
                  <Td className="text-right">244</Td>
                  <Td className={`border-r-0 ${selected ? '' : 'bg-white'}`}>ŽITIŠTE</Td>
                </tr>
              );
            })}
          </tbody>
        </table>
      </div>
      <VScroll before="h-0" thumb="flex-[73]" after="flex-[27]" />
    </div>
    <div className="flex items-center border-x border-[#a0a0a0] pr-[2px] pb-px">
      <Navigator position="11 od 27" labelClass="w-[65px]" />
      <HScroll className="ml-[110px] flex-1" thumb="w-[37%]" />
      <span className="w-[17px]" />
    </div>
    <div role="tablist" className="mt-[3px] flex gap-px border-b border-[#a0a0a0] pl-[2px]">
      <Tab active className="h-[28px] w-[193px]">Spisak Bezbednosnih Elemenata</Tab>
      <Tab className="h-[27px] w-[62px]">Događaji</Tab>
      <Tab className="h-[27px] w-[84px]">Polja po želji</Tab>
      <Tab className="h-[27px] w-[129px]">Pregled dokumenata</Tab>
      <button type="button" aria-label="Zatvori" className="mr-[2px] ml-auto flex h-[19px] w-[15px] items-center justify-center border border-[#808080]">
        <svg width="9" height="11" viewBox="0 0 9 11" stroke="black" strokeWidth="2.6"><path d="M1 1l7 9M8 1l-7 9" /></svg>
      </button>
    </div>
    <div className="flex flex-1 items-stretch gap-[2px] border-x border-[#a0a0a0] px-px pt-[2px] pb-[2px]">
      <div className="flex w-[112px] items-center border border-[#c8c8c8] bg-linear-to-b from-[#f8f8f8] to-[#ededed] pl-[3px]"><CheckLabel>F2 - IZMENE</CheckLabel></div>
      <div className="flex w-[332px] items-center justify-center border border-[#c8c8c8] bg-linear-to-b from-[#f8f8f8] to-[#ededed] text-[13px]">F1 - Pretraga po šifri, F7 - Pretraga po nazivu</div>
      <div className="flex flex-1 items-center border border-[#c8c8c8] bg-linear-to-b from-[#f8f8f8] to-[#ededed] pl-[2px]">MAGACIN ROBE - PO NABAVNIM CENAMA</div>
      <div className="flex border border-[#c8c8c8] p-px">
        <button type="button" disabled className="w-[119px] border border-[#b4b4b4] bg-[#cccccc] text-[13px] text-[#8c8c8c] [text-shadow:1px_1px_white]">Promeni / Upiši</button>
      </div>
    </div>
  </section>
);

/* ---------- report tree ---------- */

const ReportGroup = ({ title, items, marked }) => (
  <li className={marked ? 'relative' : ''}>
    {title && (
      <div className="flex h-[18px] items-center whitespace-nowrap">
        <ChevronDown size={12} strokeWidth={3.5} className="ml-[7px] text-[#505050]" />
        <span className="ml-[3px] w-[4px] border-t border-dotted border-[#808080]" />
        <span>{title}</span>
      </div>
    )}
    <ul>
      {items.map((item, i) => (
        <li key={item} className="flex h-[18px] items-center whitespace-nowrap">
          <span className={`ml-[13px] h-full w-[21px] border-dotted border-[#808080] ${marked ? '' : 'border-l'}`} />
          <span className={`w-px self-start border-l border-dotted border-[#808080] ${i === items.length - 1 ? 'h-1/2' : 'h-full'}`} />
          <span className="w-[9px] border-t border-dotted border-[#808080]" />
          <a href="#izvestaj" className={`px-[4px] leading-[18px] ${item === '3. Pregled u tabeli' ? 'bg-[#e5f3ff]' : ''}`}>{item}</a>
        </li>
      ))}
    </ul>
    {marked && <span className="pointer-events-none absolute -top-[4px] right-0 -bottom-[8px] -left-[3px] border-5 border-[#ed1c24]" />}
  </li>
);

const ReportsPanel = () => (
  <section className="flex w-[402px] shrink-0 flex-col text-[12px]">
    <div className="flex min-h-0 flex-1 border-y border-l border-[#a0a0a0] bg-white">
      <ul className="min-w-0 flex-1 pt-px">
        {REPORTS.map((group) => <ReportGroup key={group.title || 'A'} {...group} />)}
      </ul>
      <VScroll before="flex-[28]" thumb="flex-[72]" after="h-0" />
    </div>
    <div className="mt-[2px] mb-[2px] flex gap-[3px]">
      <div className="flex flex-1 items-center gap-[3px] border border-[#c8c8c8] py-px pr-px pl-[3px]">
        <label htmlFor="naziv">Naziv:</label>
        <input id="naziv" className="h-[27px] min-w-0 flex-1 border border-[#a0a0a0] bg-white px-1" />
      </div>
      <div className="flex border border-[#c8c8c8] p-px">
        <button type="button" className="h-[27px] w-[108px] border border-[#a8a8a8] bg-[#e1e1e1] text-[13px]">Parametri</button>
      </div>
    </div>
  </section>
);

/* ---------- planner ---------- */

const Planner = () => (
  <aside className="flex w-[229px] shrink-0 flex-col text-[12px]">
    <div role="tablist" className="flex gap-px border-b border-[#a0a0a0]">
      <Tab active className="h-[29px] w-[47px]">Planer</Tab>
      <Tab className="h-[28px] w-[71px]">Za štampu</Tab>
      <Tab className="h-[28px] w-[56px]">Tajmeri</Tab>
    </div>
    <div className="flex min-h-0 flex-1 border-r border-l-2 border-[#a0a0a0]">
      <div className="flex w-[43px] shrink-0 flex-col overflow-hidden border-r border-[#a0a0a0]">
        <div className="h-[39px] shrink-0" />
        <div className="relative min-h-0 flex-1 overflow-hidden">
          <span className="absolute top-[296px] h-[5px] w-full bg-linear-to-b from-[#e4e4e4] to-[#b4b4b4]" />
          {HOURS.map((hour, i) => (
            <div key={i} className="relative mr-[5px] ml-[5px] h-[48px] border-t border-[#a0a0a0]">
              <div className="flex h-[23px] items-center justify-end gap-[3px] pr-[2px] text-[15px]">
                {hour}<span className="w-[9px] text-[8px]">{hour === '12' ? 'pm' : '00'}</span>
              </div>
              <div className="ml-auto w-[11px] border-t border-[#a0a0a0]" />
            </div>
          ))}
        </div>
      </div>
      <div className="flex min-w-0 flex-1 flex-col bg-white">
        <div className="flex h-[40px] shrink-0 items-center justify-center border-b-3 border-[#c3c3c3] bg-[#f8f8f8] pt-[4px]">Tuesday, June 11</div>
        <div className="ml-[7px] min-h-0 flex-1 overflow-hidden border-l border-black">
          {HOURS.map((_, i) => (
            <div key={i}>
              <div className={`border-b border-[#a0a0a0] ${i === 0 ? 'h-[23px]' : 'h-[24px]'}`} />
              <div className="h-[24px] border-b border-[#a0a0a0]" />
            </div>
          ))}
        </div>
      </div>
      <VScroll before="flex-[167]" thumb="flex-[727]" after="flex-[106]" />
    </div>
  </aside>
);

const StatusBar = () => (
  <footer className="flex h-[31px] shrink-0 items-center border-t border-[#a0a0a0] bg-[#2b579a] text-[12px] text-white">
    <div className="mr-[3px] h-[27px] flex-1 border border-[#264f8e]" />
    <div className="flex h-[27px] w-[391px] items-center border border-[#264f8e] pl-[3px]">012 - VELEPRODAJA</div>
    <button type="button" className="h-[25px] w-[71px] border border-white">T R X</button>
    <div className="ml-[4px] h-[27px] w-[28px] border border-[#264f8e]" />
    <div className="ml-[3px] flex h-[27px] w-[36px] items-center justify-center border border-[#264f8e] text-[#8f9bb0]">CAPS</div>
    <div className="ml-[2px] flex h-[27px] w-[33px] items-center justify-center border border-[#264f8e] text-black">NUM</div>
    <div className="ml-[2px] flex h-[27px] w-[36px] items-center justify-center border border-[#264f8e] text-[#8f9bb0]">SCRL</div>
    <div className="ml-[2px] flex h-[27px] w-[32px] items-center justify-center border border-[#264f8e] text-[#8f9bb0]">INS</div>
  </footer>
);

export default function App() {
  return (
    <div className="flex h-screen min-h-[1039px] flex-col overflow-hidden bg-[#f0f0f0] font-['Noto_Sans',sans-serif] text-black">
      <Header />
      <Toolbar />
      <div className="flex min-h-0 flex-1">
        <Sidebar />
        <main className="flex min-w-0 flex-1 flex-col">
          <div role="tablist" className="flex gap-px border-b border-[#a0a0a0] text-[12px]">
            <Tab className="h-[28px] w-[97px]">BIZNISOFT v12</Tab>
            <Tab active className="h-[29px] w-[224px]">
              Izveštaji iz finansijskog poslovanja
              <span className="ml-[3px] flex h-[16px] w-[14px] items-center justify-center border border-[#808080]">
                <svg width="10" height="11" viewBox="0 0 10 11" stroke="black" strokeWidth="1.5"><path d="M0 0l10 11M10 0L0 11" /></svg>
              </span>
            </Tab>
            <Tab className="h-[28px] w-[182px]">Sekundarna analitika (objekti)</Tab>
          </div>
          <div className="mt-[2px] flex h-[362px] shrink-0 gap-[2px] px-[2px]">
            <Criteria />
            <AccountsPanel />
          </div>
          <div className="mt-[3px] flex min-h-0 flex-1 gap-[3px] pl-px">
            <ReportsPanel />
            <ObjectsPanel />
          </div>
        </main>
        <Planner />
      </div>
      <StatusBar />
    </div>
  );
}
